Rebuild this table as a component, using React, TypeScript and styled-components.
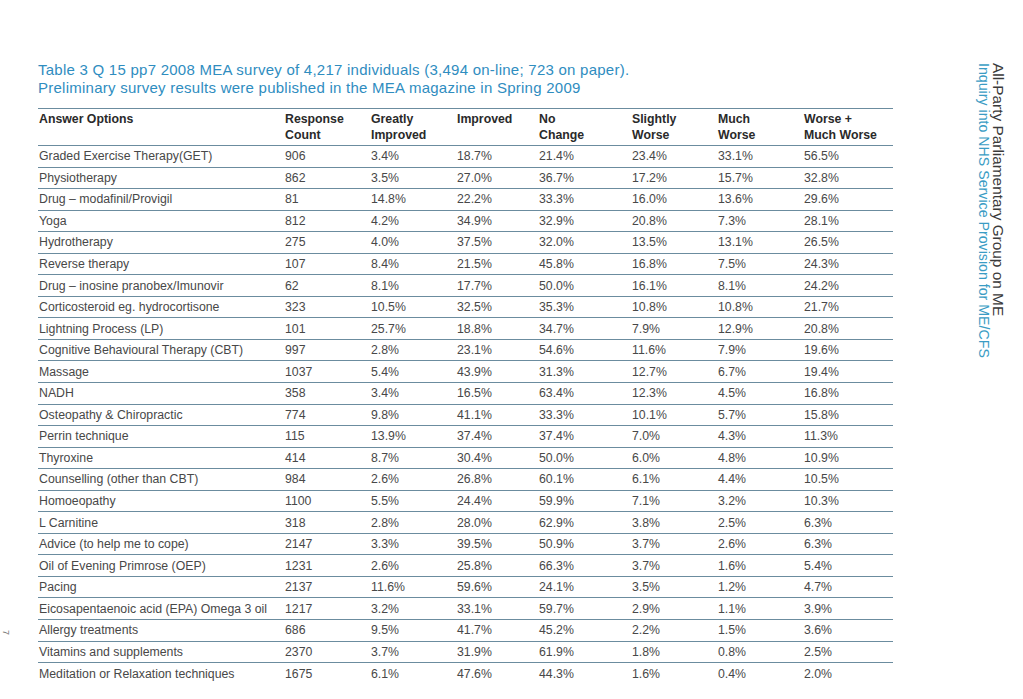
import React from "react";
import styled, { createGlobalStyle } from "styled-components";

const GlobalStyle = createGlobalStyle`
  html, body { margin: 0; padding: 0; background: #ffffff; }
  body { font-family: "Liberation Sans", Arial, sans-serif; }
`;

const Page = styled.div`
  width: 1023px;
  height: 699px;
  display: flex;
  flex-direction: row;
  background: #fff;
  overflow: hidden;
`;

const Gutter = styled.div`
  width: 38px;
  flex: none;
  display: flex;
  flex-direction: column;
  justify-content: flex-end;
  align-items: flex-start;
  padding-bottom: 64px;
  padding-left: 1px;
  box-sizing: border-box;
`;

const PageNumber = styled.div`
  writing-mode: vertical-rl;
  font-size: 9px;
  line-height: 9px;
  color: #777;
`;

const Content = styled.div`
  width: 855px;
  flex: none;
  padding-top: 61px;
  display: flex;
  flex-direction: column;
`;

const Title = styled.div`
  color: #2f8dbf;
  font-size: 15px;
  letter-spacing: 0.25px;
  line-height: 18px;
  margin-bottom: 11px;
  white-space: nowrap;
`;

const cols = "246px 86px 86px 82px 93px 86px 86px 90px";

const HeaderRow = styled.div`
  display: grid;
  grid-template-columns: ${cols};
  border-top: 1px solid #6b8c9f;
  border-bottom: 1px solid #6b8c9f;
  height: 38px;
  box-sizing: border-box;
  padding-top: 2px;
  padding-left: 1px;
`;

const HeadCell = styled.div`
  font-weight: bold;
  font-size: 12.3px;
  line-height: 16px;
  color: #2a2a2a;
  white-space: nowrap;
`;

const Row = styled.div<{ $last?: boolean }>`
  display: grid;
  grid-template-columns: ${cols};
  height: 21.55px;
  box-sizing: border-box;
  align-items: center;
  padding-left: 1px;
  border-bottom: ${(p) => (p.$last ? "none" : "1px solid #6b8c9f")};
`;

const Cell = styled.div`
  font-size: 12.3px;
  color: #484848;
  white-space: nowrap;
`;

const Sidebar = styled.div`
  flex: 1;
  display: flex;
  justify-content: flex-end;
  padding-top: 63px;
  padding-right: 18px;
  box-sizing: border-box;
`;

const SideText = styled.div`
  writing-mode: vertical-rl;
  line-height: 14px;
  white-space: nowrap;
`;

const SideLine = styled.div<{ $accent?: boolean }>`
  color: ${(p) => (p.$accent ? "#3a9cc4" : "#3a3a3a")};
  font-size: ${(p) => (p.$accent ? "14.2px" : "15.4px")};
`;

const headers: [string, string][] = [
  ["Answer Options", ""],
  ["Response", "Count"],
  ["Greatly", "Improved"],
  ["Improved", ""],
  ["No", "Change"],
  ["Slightly", "Worse"],
  ["Much", "Worse"],
  ["Worse +", "Much Worse"],
];

const rows: string[][] = [
  ["Graded Exercise Therapy(GET)", "906", "3.4%", "18.7%", "21.4%", "23.4%", "33.1%", "56.5%"],
  ["Physiotherapy", "862", "3.5%", "27.0%", "36.7%", "17.2%", "15.7%", "32.8%"],
  ["Drug – modafinil/Provigil", "81", "14.8%", "22.2%", "33.3%", "16.0%", "13.6%", "29.6%"],
  ["Yoga", "812", "4.2%", "34.9%", "32.9%", "20.8%", "7.3%", "28.1%"],
  ["Hydrotherapy", "275", "4.0%", "37.5%", "32.0%", "13.5%", "13.1%", "26.5%"],
  ["Reverse therapy", "107", "8.4%", "21.5%", "45.8%", "16.8%", "7.5%", "24.3%"],
  ["Drug – inosine pranobex/Imunovir", "62", "8.1%", "17.7%", "50.0%", "16.1%", "8.1%", "24.2%"],
  ["Corticosteroid eg. hydrocortisone", "323", "10.5%", "32.5%", "35.3%", "10.8%", "10.8%", "21.7%"],
  ["Lightning Process (LP)", "101", "25.7%", "18.8%", "34.7%", "7.9%", "12.9%", "20.8%"],
  ["Cognitive Behavioural Therapy (CBT)", "997", "2.8%", "23.1%", "54.6%", "11.6%", "7.9%", "19.6%"],
  ["Massage", "1037", "5.4%", "43.9%", "31.3%", "12.7%", "6.7%", "19.4%"],
  ["NADH", "358", "3.4%", "16.5%", "63.4%", "12.3%", "4.5%", "16.8%"],
  ["Osteopathy & Chiropractic", "774", "9.8%", "41.1%", "33.3%", "10.1%", "5.7%", "15.8%"],
  ["Perrin technique", "115", "13.9%", "37.4%", "37.4%", "7.0%", "4.3%", "11.3%"],
  ["Thyroxine", "414", "8.7%", "30.4%", "50.0%", "6.0%", "4.8%", "10.9%"],
  ["Counselling (other than CBT)", "984", "2.6%", "26.8%", "60.1%", "6.1%", "4.4%", "10.5%"],
  ["Homoeopathy", "1100", "5.5%", "24.4%", "59.9%", "7.1%", "3.2%", "10.3%"],
  ["L Carnitine", "318", "2.8%", "28.0%", "62.9%", "3.8%", "2.5%", "6.3%"],
  ["Advice (to help me to cope)", "2147", "3.3%", "39.5%", "50.9%", "3.7%", "2.6%", "6.3%"],
  ["Oil of Evening Primrose (OEP)", "1231", "2.6%", "25.8%", "66.3%", "3.7%", "1.6%", "5.4%"],
  ["Pacing", "2137", "11.6%", "59.6%", "24.1%", "3.5%", "1.2%", "4.7%"],
  ["Eicosapentaenoic acid (EPA) Omega 3 oil", "1217", "3.2%", "33.1%", "59.7%", "2.9%", "1.1%", "3.9%"],
  ["Allergy treatments", "686", "9.5%", "41.7%", "45.2%", "2.2%", "1.5%", "3.6%"],
  ["Vitamins and supplements", "2370", "3.7%", "31.9%", "61.9%", "1.8%", "0.8%", "2.5%"],
  ["Meditation or Relaxation techniques", "1675", "6.1%", "47.6%", "44.3%", "1.6%", "0.4%", "2.0%"],
];

export default function App() {
  return (
    <>
      <GlobalStyle />
      <Page>
        <Gutter>
          <PageNumber>7</PageNumber>
        </Gutter>
        <Content>
          <Title>
            Table 3 Q 15 pp7 2008 MEA survey of 4,217 individuals (3,494 on-line; 723 on paper).
            <br />
            Preliminary survey results were published in the MEA magazine in Spring 2009
          </Title>
          <HeaderRow>
            {headers.map(([a, b], i) => (
              <HeadCell key={i}>
                {a}
                {b && <br />}
                {b}
              </HeadCell>
            ))}
          </HeaderRow>
          {rows.map((r, i) => (
            <Row key={i} $last={i === rows.length - 1}>
              {r.map((c, j) => (
                <Cell key={j}>{c}</Cell>
              ))}
            </Row>
          ))}
        </Content>
        <Sidebar>
          <SideText>
            <SideLine>All-Party Parliamentary Group on ME</SideLine>
            <SideLine $accent>Inquiry into NHS Service Provision for ME/CFS</SideLine>
          </SideText>
        </Sidebar>
      </Page>
    </>
  );
}
